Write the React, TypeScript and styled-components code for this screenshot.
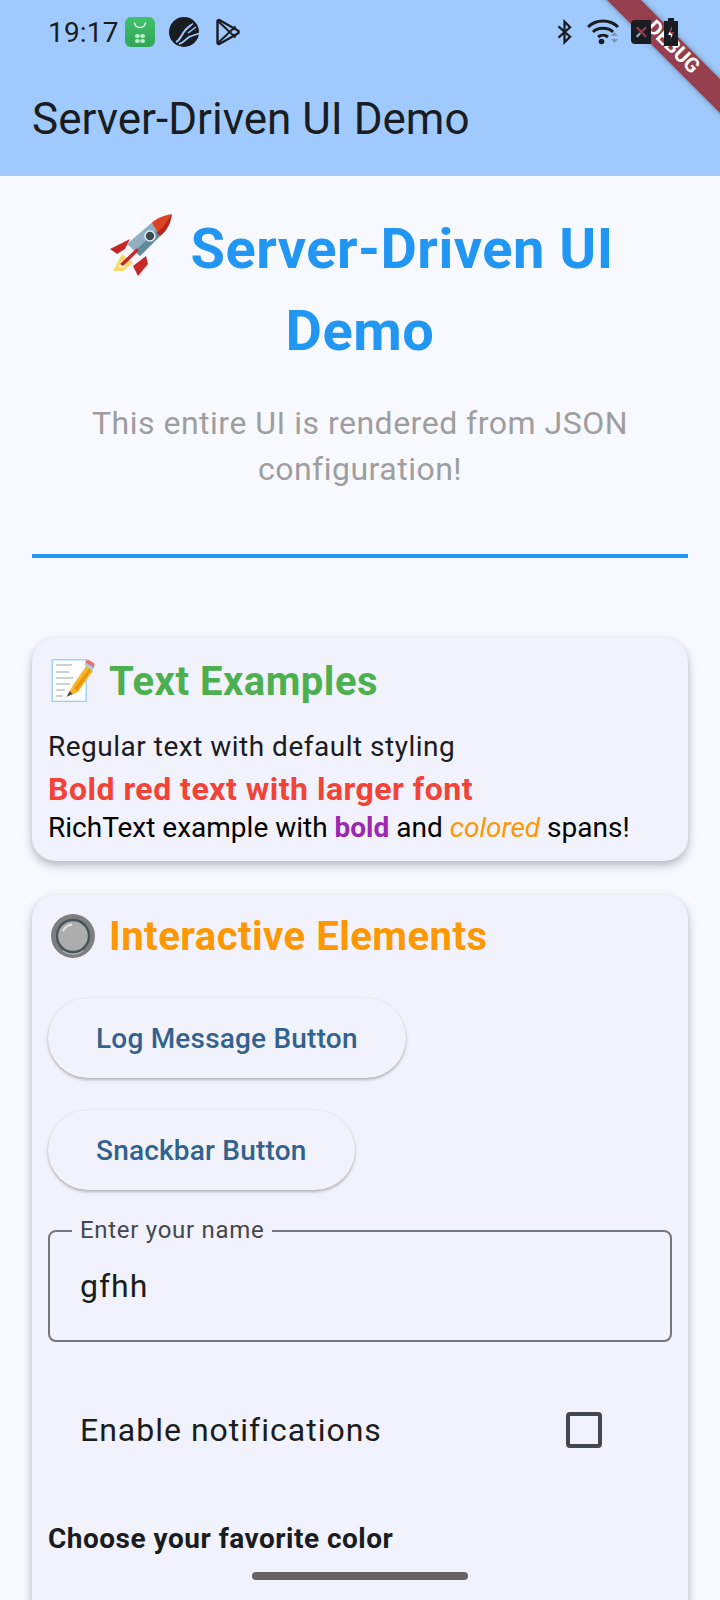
import React from "react";
import styled, { createGlobalStyle } from "styled-components";

const Global = createGlobalStyle`
  html, body { margin: 0; padding: 0; width: 720px; height: 1600px; overflow: hidden; background: #f8f9ff; }
  #root { width: 720px; height: 1600px; }
  * { box-sizing: border-box; }
`;

const Screen = styled.div`
  position: relative;
  width: 720px;
  height: 1600px;
  overflow: hidden;
  display: flex;
  flex-direction: column;
  background: #f8f9ff;
  font-family: Roboto, "Liberation Sans", sans-serif;
  color: #191c20;
`;
const Top = styled.header`
  height: 176px;
  flex: none;
  background: #a0cafd;
  display: flex;
  flex-direction: column;
`;
const StatusBar = styled.div`
  position: relative;
  z-index: 2;
  height: 64px;
  padding: 0 0 0 48px;
  display: flex;
  align-items: center;
  font-size: 28px;
  letter-spacing: 0.2px;
  color: #191c20;
`;
const StatusLeft = styled.div`
  display: flex;
  align-items: center;
`;
const StatusRight = styled.div`
  margin-left: auto;
  display: flex;
  align-items: center;
  padding-right: 42px;
`;
const Toolbar = styled.div`
  height: 112px;
  padding: 0 32px 2px;
  display: flex;
  align-items: center;
  font-size: 44px;
  font-weight: 400;
`;
const Banner = styled.div`
  position: absolute;
  z-index: 1;
  top: 36px;
  right: -72px;
  width: 240px;
  height: 24px;
  transform: rotate(45deg);
  background: #953e4e;
  box-shadow: 0 0 6px rgba(0, 0, 0, 0.35);
  color: #fff;
  font-size: 20.4px;
  font-weight: 700;
  line-height: 21px;
  text-align: center;
`;
const Body = styled.main`
  flex: 1;
  min-height: 0;
  padding: 32px 32px 0;
  display: flex;
  flex-direction: column;
`;
const Hero = styled.section`
  text-align: center;
`;
const HeroTitle = styled.h1`
  margin: 0;
  padding: 0 10px;
  font-size: 56px;
  font-weight: 700;
  line-height: 82px;
  letter-spacing: 0.5px;
  color: #2196f3;
  svg {
    vertical-align: -8px;
    margin-left: 4px;
    margin-right: 18px;
  }
`;
const Subtitle = styled.p`
  margin: 28px 0 0;
  font-size: 32px;
  font-weight: 400;
  line-height: 46px;
  letter-spacing: 0.5px;
  color: #9e9e9e;
`;
const Divider = styled.div`
  height: 4px;
  margin-top: 62px;
  background: #2196f3;
  flex: none;
`;
const Card = styled.section<{ $grow?: boolean }>`
  margin-top: ${(p) => (p.$grow ? "34px" : "80px")};
  padding: ${(p) => (p.$grow ? "14px 16px 16px" : "16px 16px 14px")};
  border-radius: 24px;
  background: #f1f2fb;
  box-shadow: 0 4px 10px rgba(0, 0, 0, 0.28);
  flex: ${(p) => (p.$grow ? "1 0 auto" : "none")};
  ${(p) => (p.$grow ? "height: 760px; border-bottom-left-radius: 0; border-bottom-right-radius: 0;" : "")}
`;
const CardTitle = styled.h2<{ $color: string }>`
  margin: 0;
  height: 54px;
  display: flex;
  align-items: center;
  gap: 13px;
  font-size: 40px;
  font-weight: 700;
  letter-spacing: 0.5px;
  color: ${(p) => p.$color};
`;
const Regular = styled.div`
  margin-top: 19px;
  font-size: 28px;
  line-height: 40px;
  letter-spacing: 0.5px;
`;
const BoldRed = styled.div`
  margin-top: 2px;
  font-size: 32px;
  font-weight: 700;
  line-height: 40px;
  letter-spacing: 0.5px;
  color: #f44336;
`;
const Rich = styled.div`
  font-size: 28px;
  line-height: 38px;
  color: #000;
`;
const Purple = styled.b`
  color: #9c27b0;
  font-weight: 700;
`;
const Orange = styled.i`
  color: #ff9800;
`;
const Pill = styled.button<{ $first?: boolean }>`
  display: block;
  height: 80px;
  margin-top: ${(p) => (p.$first ? "35px" : "32px")};
  padding: 0 48px;
  border: 0;
  border-radius: 40px;
  background: #f2f3fa;
  box-shadow: 0 2px 3px rgba(0, 0, 0, 0.25), 0 0 2px rgba(0, 0, 0, 0.07);
  color: #32628d;
  font-family: inherit;
  font-size: 28px;
  font-weight: 500;
  letter-spacing: 0.2px;
`;
const Field = styled.div`
  position: relative;
  height: 112px;
  margin-top: 40px;
  padding: 0 30px;
  border: 2px solid #73777f;
  border-radius: 8px;
  display: flex;
  align-items: center;
  font-size: 32px;
  letter-spacing: 1px;
`;
const FieldLabel = styled.span`
  position: absolute;
  top: -16px;
  left: 22px;
  padding: 0 8px;
  background: #f1f2fb;
  color: #43474e;
  font-size: 24px;
  line-height: 28px;
  letter-spacing: 0.7px;
`;
const CheckRow = styled.div`
  height: 112px;
  margin-top: 32px;
  padding: 0 70px 0 32px;
  display: flex;
  align-items: center;
  justify-content: space-between;
  font-size: 32px;
  letter-spacing: 1px;
`;
const Box = styled.div`
  width: 36px;
  height: 36px;
  border: 4px solid #43474e;
  border-radius: 4px;
`;
const GroupLabel = styled.div`
  margin-top: 33px;
  font-size: 28px;
  font-weight: 700;
  line-height: 40px;
  letter-spacing: 0.5px;
`;
const HomeBar = styled.div`
  position: absolute;
  z-index: 3;
  left: 252px;
  bottom: 20px;
  width: 216px;
  height: 8px;
  border-radius: 4px;
  background: #666;
`;
const Glyph = styled.svg<{ $l?: number; $r?: number }>`
  flex: none;
  margin-left: ${(p) => p.$l ?? 0}px;
  margin-right: ${(p) => p.$r ?? 0}px;
`;

const Market = () => (
  <Glyph $l={6} width="30" height="30" viewBox="0 0 30 30">
    <defs>
      <linearGradient id="mk" x1="0" y1="0" x2="0" y2="1">
        <stop offset="0" stopColor="#41c26b" />
        <stop offset="1" stopColor="#2fa656" />
      </linearGradient>
    </defs>
    <rect width="30" height="30" rx="6" fill="url(#mk)" />
    <path d="M9.500 5.500c.5 6.500 10.500 6.500 11 0" fill="none" stroke="#e4f7ea" strokeWidth="1.500" />
    <rect x="10" y="17" width="4.800" height="4" rx="2" fill="#bdeccb" />
    <rect x="15.200" y="17" width="4.800" height="4" rx="2" fill="#bdeccb" />
    <rect x="10" y="22" width="4.800" height="4" rx="2" fill="#bdeccb" />
    <rect x="15.200" y="22" width="4.800" height="4" rx="2" fill="#bdeccb" />
  </Glyph>
);
const Fork = () => (
  <Glyph $l={14} width="30" height="30" viewBox="0 0 30 30">
    <circle cx="15" cy="15" r="15" fill="#191c20" />
    <path d="M7 25c3-1 4-4 6-7 2-4 5-7 9-10" stroke="#a0cafd" strokeWidth="2" fill="none" />
    <path d="M16 13l8-6.500M19 16l8-6" stroke="#a0cafd" strokeWidth="1.500" fill="none" />
    <path d="M10 27c5-1 7-5 10-7 3-1.500 6-2.500 10-3.500" stroke="#a0cafd" strokeWidth="1.800" fill="none" />
  </Glyph>
);
const Play = () => (
  <Glyph $l={16} width="26" height="28" viewBox="0 0 26 28">
    <path d="M2.500 3.500c0-1.500 1-2 2.300-1.300l18 10.300c1.200.7 1.200 2.300 0 3L4.800 25.800c-1.300.7-2.300.2-2.300-1.300z" fill="none" stroke="#191c20" strokeWidth="2.400" strokeLinejoin="round" />
    <path d="M3 3l17.500 16.500M3 25L20.500 8.500" fill="none" stroke="#191c20" strokeWidth="2" />
  </Glyph>
);
const Bluetooth = () => (
  <Glyph $r={15} width="15" height="26" viewBox="0 0 16 26">
    <path d="M1.500 7l12.500 11-6 6V2l6 6L1.500 19" fill="none" stroke="#191c20" strokeWidth="2.400" />
  </Glyph>
);
const Wifi = () => (
  <Glyph $r={12} width="32" height="26" viewBox="0 0 32 26">
    <path d="M1 8c8-8 22-8 30 0M6 13c5-5 15-5 20 0M11 18c3-2.500 7-2.500 10 0" fill="none" stroke="#191c20" strokeWidth="3" />
    <circle cx="14.500" cy="22.500" r="2.800" fill="#191c20" />
    <path d="M24 17h7l-3.500-4zM24 20h7l-3.500 4z" fill="#7f93ab" />
  </Glyph>
);
const NoSim = () => (
  <Glyph $r={13} width="20" height="24" viewBox="0 0 20 24">
    <path
      fillRule="evenodd"
      d="M0 4a4 4 0 0 1 4-4h16v24H4a4 4 0 0 1-4-4zM6.400 6.500L5 7.900 9 12l-4 4.100 1.400 1.400 4-4.100 4.100 4.100 1.400-1.400-4-4.100 4-4.100-1.400-1.400-4.100 4.100z"
      fill="#191c20"
    />
  </Glyph>
);
const Battery = () => (
  <Glyph width="14" height="28" viewBox="0 0 14 28">
    <path
      fillRule="evenodd"
      d="M4 0h6v3h4v25H0V3h4zM8 8l-4 9h3l-1 6 4-9H7z"
      fill="#191c20"
    />
  </Glyph>
);

const Rocket = () => (
  <svg width="62" height="62" viewBox="10 8 62 62">
    <path d="M10 43l20-10-5 10-8 5z" fill="#c62828" />
    <path d="M33 60l13-10 2 8-10 12z" fill="#c62828" />
    <path d="M13 65l9-17 11 9-10 8z" fill="#fdd663" />
    <path d="M18 61l4-7 5 4-4 4z" fill="#fff3c4" />
    <path d="M51.700 16.700L27 38l13 12 20-20z" fill="#8fb0c3" />
    <path d="M60 30L40 50l-5-5 22-21z" fill="#5f8a9e" />
    <path d="M51.700 16.700C57 12 65 9 71.700 8.300c-.5 7-4 16-11.700 21.700z" fill="#db4325" />
    <path d="M71.700 8.300c-.5 7-4 16-11.700 21.700l-3-3c6-5 11-12 14.700-18.700z" fill="#b4261b" />
    <circle cx="50" cy="30" r="5.700" fill="#e9eff3" />
    <circle cx="50" cy="30" r="4.200" fill="#3c4a52" />
    <path d="M20 58l17-16 1.500 3L23 60z" fill="#c62828" />
    <g fill="#ffffff">
      <circle cx="37" cy="13" r="1.500" />
      <circle cx="18" cy="26" r="1" />
      <circle cx="65" cy="40" r="1" />
      <circle cx="58" cy="53" r="1" />
    </g>
  </svg>
);
const Memo = () => (
  <Glyph $l={3} $r={-1} width="46" height="46" viewBox="6 8 46 46">
    <rect x="7.200" y="9.800" width="34" height="41.500" fill="#fff" stroke="#8ccbf5" strokeWidth="1.200" />
    <path d="M11 15h16M11 22h13M11 28h17M11 34h14M11 40h9M11 46h7" stroke="#9aa3a8" strokeWidth="1" />
    <path d="M21.700 46.700L28 35l14-20 6 6-15 21z" fill="#f9b52c" />
    <path d="M29 38.500l16-20.500 1.500 1.500L32 41z" fill="#e8930c" />
    <path d="M21.700 46.700L24.500 41l3.500 3z" fill="#5d5148" />
    <path d="M39 14l3-2 7 5-1.500 4z" fill="#9fd3df" />
    <path d="M40 12l3-2.500 6.500 4L49 18z" fill="#ec6f73" />
  </Glyph>
);
const RadioEmoji = () => (
  <Glyph $l={3} $r={1} width="44" height="44" viewBox="0 0 44 44">
    <circle cx="22" cy="22" r="22" fill="#7d7f80" />
    <path d="M12 37c6 4 14 4 20 0" stroke="#b5b6b7" strokeWidth="1.500" fill="none" />
    <circle cx="22" cy="22" r="16" fill="#adadad" stroke="#47565a" strokeWidth="2.400" />
    <path d="M12 17c2-4 5-6 9-6.500" stroke="#e5e5e5" strokeWidth="1.800" fill="none" />
  </Glyph>
);

export default function App() {
  return (
    <Screen>
      <Global />
      <Top>
        <StatusBar>
          <StatusLeft>
            19:17
            <Market />
            <Fork />
            <Play />
          </StatusLeft>
          <StatusRight>
            <Bluetooth />
            <Wifi />
            <NoSim />
            <Battery />
          </StatusRight>
        </StatusBar>
        <Toolbar>Server-Driven UI Demo</Toolbar>
      </Top>
      <Body>
        <Hero>
          <HeroTitle>
            <Rocket />
            Server-Driven UI Demo
          </HeroTitle>
          <Subtitle>This entire UI is rendered from JSON configuration!</Subtitle>
        </Hero>
        <Divider />
        <Card>
          <CardTitle $color="#4caf50">
            <Memo />
            Text Examples
          </CardTitle>
          <Regular>Regular text with default styling</Regular>
          <BoldRed>Bold red text with larger font</BoldRed>
          <Rich>
            RichText example with <Purple>bold</Purple> and <Orange>colored</Orange> spans!
          </Rich>
        </Card>
        <Card $grow>
          <CardTitle $color="#ff9800">
            <RadioEmoji />
            Interactive Elements
          </CardTitle>
          <Pill $first>Log Message Button</Pill>
          <Pill>Snackbar Button</Pill>
          <Field>
            <FieldLabel>Enter your name</FieldLabel>
            gfhh
          </Field>
          <CheckRow>
            Enable notifications
            <Box />
          </CheckRow>
          <GroupLabel>Choose your favorite color</GroupLabel>
        </Card>
      </Body>
      <Banner>DEBUG</Banner>
      <HomeBar />
    </Screen>
  );
}
